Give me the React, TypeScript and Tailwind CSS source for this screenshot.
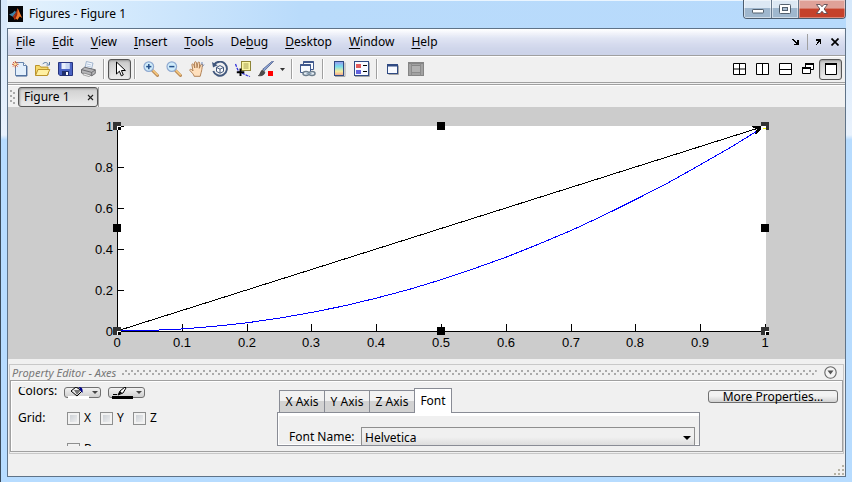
import type { ReactNode } from 'react';

const menus = [
  { before: '', key: 'F', after: 'ile' },
  { before: '', key: 'E', after: 'dit' },
  { before: '', key: 'V', after: 'iew' },
  { before: '', key: 'I', after: 'nsert' },
  { before: '', key: 'T', after: 'ools' },
  { before: 'De', key: 'b', after: 'ug' },
  { before: '', key: 'D', after: 'esktop' },
  { before: '', key: 'W', after: 'indow' },
  { before: '', key: 'H', after: 'elp' },
];

function Glyph({ children }: { children: ReactNode }) {
  return (
    <svg viewBox="0 0 16 16" className="size-4 shrink-0" aria-hidden="true">
      {children}
    </svg>
  );
}

function ToolButton({ label, pressed, children }: { label: string; pressed?: boolean; children: ReactNode }) {
  return (
    <button
      type="button"
      aria-label={label}
      aria-pressed={pressed}
      className={
        pressed
          ? 'flex h-[21px] w-[23px] shrink-0 items-center justify-center rounded-[3px] border border-[#555] bg-linear-to-b from-[#c8c8c8] to-[#ededed] shadow-[inset_0_1px_2px_#999]'
          : 'flex h-[21px] w-[23px] shrink-0 items-center justify-center'
      }
    >
      {children}
    </button>
  );
}

function Separator() {
  return <div className="mx-[3px] h-5 w-0.5 shrink-0 border-r border-l border-r-white border-l-[#a0a0a0]" />;
}

function Magnifier({ plus }: { plus?: boolean }) {
  return (
    <Glyph>
      <path d="M9.5 9.5l5 5" stroke="#b98a58" strokeWidth="3" strokeLinecap="round" />
      <path d="M10 9.5l4.3 4.3" stroke="#f6c77c" strokeWidth="1.6" strokeLinecap="round" />
      <circle cx="5.8" cy="5.6" r="4.8" fill="#d0ecfa" stroke="#8fa9d0" strokeWidth="1.2" />
      <path d="M3.2 5.6h5.2" stroke="#24508c" strokeWidth="1.5" />
      {plus && <path d="M5.8 3v5.2" stroke="#24508c" strokeWidth="1.5" />}
    </Glyph>
  );
}

function TitleBar() {
  return (
    <header className="flex h-7 items-start bg-linear-to-r from-[#e4f2fd] via-[#b9dbfb] via-35% to-[#b7dafc] shadow-[inset_0_1px_0_#eaf5ff]">
      <div className="flex h-full min-w-0 flex-1 items-center gap-1.5 pl-px">
        <svg viewBox="0 0 15 16" className="h-4 w-[15px]" aria-hidden="true">
          <rect width="15" height="16" fill="#050608" />
          <path d="M1 8.5l3.5-1.4L7 4.5l1 2-3.2 4.2z" fill="#3f83a8" />
          <path d="M5 10.6l3-4L9.7 2.2 11 6l-2 6-2.3 2z" fill="#c33a14" />
          <path d="M9.7 2.2L14.2 12l-2.4-1.4L9.3 14 7 11.5l1.8-4z" fill="#f0792a" />
          <path d="M9.7 2.2L9.2 9 7 13.6 6 11l2.2-4z" fill="#8c2412" />
        </svg>
        <h1 className="text-xs text-black">Figures - Figure 1</h1>
      </div>
      <div className="flex h-[19px] overflow-hidden rounded-b-[4px] border border-t-0 border-[#4c5c6e]">
        <button type="button" aria-label="Minimize" className="flex w-7 items-center justify-center border-r border-[#66788c] bg-linear-to-b from-[#dce8f4] from-45% to-[#9fb7ce] to-45% shadow-[inset_0_0_0_1px_#ffffff80]">
          <svg viewBox="0 0 12 8" className="mt-1 h-2 w-3">
            <rect x="0.5" y="2.5" width="11" height="3.5" rx="0.6" fill="#fff" stroke="#53606e" />
          </svg>
        </button>
        <button type="button" aria-label="Maximize" className="flex w-[27px] items-center justify-center border-r border-[#66788c] bg-linear-to-b from-[#dce8f4] from-45% to-[#9fb7ce] to-45% shadow-[inset_0_0_0_1px_#ffffff80]">
          <svg viewBox="0 0 12 10" className="h-2.5 w-3">
            <rect x="0.5" y="0.5" width="11" height="9" rx="0.8" fill="#fff" stroke="#53606e" />
            <rect x="3.5" y="3.5" width="5" height="3" fill="#a9bdd1" stroke="#53606e" />
          </svg>
        </button>
        <button type="button" aria-label="Close window" className="flex w-[46px] items-center justify-center bg-linear-to-b from-[#dfa198] from-45% to-[#c5412b] to-50% shadow-[inset_0_0_0_1px_#ffffff60]">
          <svg viewBox="0 0 12 10" className="h-2.5 w-3">
            <path d="M0.5 0.5h3.6L6 2.8 7.9 0.5h3.6L8.1 5l3.4 4.5H7.9L6 7.2 4.1 9.5H0.5L3.9 5z" fill="#fff" stroke="#5b4a50" strokeWidth="0.9" />
          </svg>
        </button>
      </div>
    </header>
  );
}

function MenuBar() {
  return (
    <nav className="flex h-[27px] items-center border-b border-[#a0a0a0] bg-linear-to-b from-white via-[#e6eaf6] via-34% to-[#dfe4f4] shadow-[inset_0_-18px_12px_-6px_#ccd3e9]">
      <div className="flex flex-1 gap-[17px] pl-2">
        {menus.map((m) => (
          <button key={m.key + m.after} type="button" className="text-xs text-black">
            {m.before}
            <span className="underline underline-offset-2">{m.key}</span>
            {m.after}
          </button>
        ))}
      </div>
      <div className="flex items-center gap-1.5 pr-1.5">
        <button type="button" aria-label="Dock" className="mr-px">
          <svg viewBox="0 0 8 8" className="size-2" shapeRendering="crispEdges">
            <path d="M0 1h2v1h1v1h1v1h1V2h2v5H2V6h2V5H3V4H2V3H1V2H0z" />
          </svg>
        </button>
        <div className="h-4 w-px bg-[#a0a0a0]" />
        <button type="button" aria-label="Undock" className="ml-px">
          <svg viewBox="0 0 8 8" className="size-2" shapeRendering="crispEdges">
            <path d="M1 1h5v5H5V4H4v1H3v1H2v1H1V6h1V4h1V3H1z" />
          </svg>
        </button>
        <button type="button" aria-label="Close" className="ml-0.5">
          <svg viewBox="0 0 8 8" className="size-2">
            <path d="M0.5 0.5l7 7M7.5 0.5l-7 7" stroke="#000" strokeWidth="1.7" />
          </svg>
        </button>
      </div>
    </nav>
  );
}

function Toolbar() {
  return (
    <div role="toolbar" className="flex h-[27px] items-center border-b border-[#a0a0a0] shadow-[inset_0_1px_0_#fff]">
      <ToolButton label="New figure">
        <Glyph>
          <path d="M3.5 1.5h8l3 3v10h-11z" fill="#e3effb" stroke="#6685ad" />
          <path d="M11.5 1.5v3h3" fill="#fff" stroke="#6685ad" />
          <path d="M14.9 5v10H4" stroke="#3d5f91" fill="none" />
          <path d="M3.3 0v6.6M0 3.3h6.6M1 1l4.6 4.6M5.6 1L1 5.6" stroke="#cf5b35" />
          <circle cx="3.3" cy="3.3" r="1.3" fill="#ffe6a0" />
        </Glyph>
      </ToolButton>
      <ToolButton label="Open">
        <Glyph>
          <path d="M0.5 14V4.500h4l1.2 1.600h7.300V14z" fill="#f6d96b" stroke="#bb932b" />
          <path d="M0.5 14.500l2.500-6h11.800l-2.600 6z" fill="#fff0a2" stroke="#bb932b" />
          <path d="M7.500 3.200c2-2.400 4.600-2 5.800 0M14.500 1v3h-3" stroke="#56779e" fill="none" />
        </Glyph>
      </ToolButton>
      <ToolButton label="Save">
        <Glyph>
          <path d="M0.5 1.5h14v13H1.8L0.5 13z" fill="#4b64c4" stroke="#27347f" />
          <rect x="3.500" y="2" width="8" height="6" fill="#e8effb" />
          <path d="M7.500 2h4v6h-4z" fill="#c7d7f2" />
          <rect x="4" y="10" width="7" height="4.5" fill="#20306c" />
          <rect x="8" y="11" width="2" height="3" fill="#fff" />
        </Glyph>
      </ToolButton>
      <ToolButton label="Print">
        <Glyph>
          <path d="M4 7l1.4-6.500 6.600 1.600L10.500 8z" fill="#f4f8fd" stroke="#8ba3c1" strokeWidth="0.8" />
          <path d="M5.800 3l4.500 1M5.400 5l4.600 1" stroke="#9db4d0" strokeWidth="0.7" />
          <path d="M0.500 8.600l3.200-2.400 10.600 2.600v3.600l-3.400 2.400L0.500 12z" fill="#b6b6b8" stroke="#58585c" strokeWidth="0.8" />
          <path d="M0.500 8.600l10.200 2.800 3.600-2.600M10.700 11.400v3.200" fill="none" stroke="#5b5b5f" strokeWidth="0.8" />
          <path d="M2.500 12l7.500 2.200-2 1.400-6-1.800z" fill="#eee" stroke="#777" strokeWidth="0.6" />
        </Glyph>
      </ToolButton>
      <Separator />
      <ToolButton label="Edit plot" pressed>
        <Glyph>
          <path d="M4.5 1v12l2.9-2.8 1.9 4.6 2-.9-1.9-4.4h4z" fill="#fff" stroke="#000" />
        </Glyph>
      </ToolButton>
      <Separator />
      <ToolButton label="Zoom in">
        <Magnifier plus />
      </ToolButton>
      <ToolButton label="Zoom out">
        <Magnifier />
      </ToolButton>
      <ToolButton label="Pan">
        <Glyph>
          <path
            d="M5.2 15.3c-.4-2-2.200-3.300-4.400-6 .1-1.700 1.700-1.300 3.200.7L2.900 3.800c.1-1.400 1.600-1.300 1.900 0l1 3.200-.3-5.200c.2-1.500 1.700-1.400 2 0l.5 5 .9-5c.4-1.300 1.800-1 1.800.4l-.4 5.100 1.700-3.700c.6-1.100 1.800-.6 1.500.7-.7 3.700-.6 4.800-1.400 7.400l-.9 3.600z"
            fill="#ffe0bd"
            stroke="#a9774a"
            strokeWidth="0.9"
          />
          <path d="M13 1v3M15 3.5l-1.5 2" stroke="#4e72b0" strokeWidth="0.8" />
        </Glyph>
      </ToolButton>
      <ToolButton label="Rotate 3D">
        <Glyph>
          <path d="M2.2 3.6A7 7 0 1 1 1.3 10" fill="none" stroke="#42587d" strokeWidth="1.9" />
          <path d="M0 1l1 5.6 4.6-2.3z" fill="#42587d" />
          <path d="M8 4.6l3.5 1.8v4L8 12.2l-3.5-1.8v-4z M4.5 6.4L8 8.2l3.5-1.8M8 8.2v4" fill="#fff" stroke="#42587d" />
        </Glyph>
      </ToolButton>
      <ToolButton label="Data cursor">
        <Glyph>
          <rect x="6.500" y="0.500" width="9" height="9" fill="#fbf7a6" stroke="#8e8538" />
          <path d="M8.500 3h5M8.500 5h5M8.500 7h5" stroke="#9b9348" strokeWidth="0.9" />
          <path d="M0.500 3l1.500 4 2 4M7 12l3 1.500 2 1 3 1" stroke="#2929d8" strokeWidth="1.2" strokeDasharray="3 1" fill="none" />
          <path d="M5.500 7.500v7.500M1.800 11.200h7.500" stroke="#000" strokeWidth="1.900" />
        </Glyph>
      </ToolButton>
      <ToolButton label="Brush">
        <Glyph>
          <path d="M15.500.4L6.600 9.600l-1.800-1.400L14.400 0z" fill="#90a8d8" stroke="#3b4c7d" strokeWidth="0.7" />
          <path d="M.2 14.700c2.200-.5 1.700-4.400 4.200-5.600l2.400 1.800c.2 2.800-3 4.400-6.600 3.800z" fill="#4d4d4d" stroke="#333" strokeWidth="0.6" />
          <rect x="10" y="10" width="5" height="5" fill="#f00" />
        </Glyph>
      </ToolButton>
      <button type="button" aria-label="Brush colour" className="flex h-5 w-[11px] items-center justify-center">
        <svg viewBox="0 0 5 3" className="h-[3px] w-[5px]">
          <path d="M0 0h5L2.5 3z" fill="#333" />
        </svg>
      </button>
      <Separator />
      <ToolButton label="Link plot">
        <Glyph>
          <path d="M3.500.500h10v8h-10z" fill="#f8fbff" stroke="#40598d" />
          <path d="M3.500 1h10" stroke="#40598d" strokeWidth="2" />
          <path d="M0.500 3.500h10v8h-10z" fill="#f8fbff" stroke="#40598d" />
          <path d="M0.500 4h10" stroke="#40598d" strokeWidth="2" />
          <ellipse cx="6" cy="12.500" rx="3" ry="2" fill="#e6eef5" stroke="#6c7d8c" strokeWidth="1.500" />
          <ellipse cx="12" cy="12.500" rx="3" ry="2" fill="#e6eef5" stroke="#6c7d8c" strokeWidth="1.500" />
          <path d="M6.500 12.500h5" stroke="#8ea4b8" strokeWidth="1.500" />
        </Glyph>
      </ToolButton>
      <Separator />
      <ToolButton label="Insert colorbar">
        <Glyph>
          <defs>
            <linearGradient id="spectrum" x1="0" x2="0" y1="0" y2="1">
              <stop offset="0" stopColor="#9a97ee" />
              <stop offset="0.35" stopColor="#78dcec" />
              <stop offset="0.7" stopColor="#f4efa0" />
              <stop offset="1" stopColor="#f2a08f" />
            </linearGradient>
          </defs>
          <path d="M4 15.5h10V1.5" stroke="#a6a6a6" fill="none" />
          <rect x="3.5" y="0.5" width="9" height="14" fill="url(#spectrum)" stroke="#304b83" />
        </Glyph>
      </ToolButton>
      <ToolButton label="Insert legend">
        <Glyph>
          <path d="M1 15.5h14.5V1.5" stroke="#a6a6a6" fill="none" />
          <rect x="0.5" y="0.5" width="14" height="14" fill="#f8faff" stroke="#304b83" />
          <rect x="2" y="3" width="5" height="4" fill="#e25b5b" />
          <rect x="2" y="9" width="5" height="4" fill="#6262dd" />
          <path d="M9 4.5h4M9 10.5h4" stroke="#000" />
        </Glyph>
      </ToolButton>
      <Separator />
      <ToolButton label="Hide plot tools">
        <Glyph>
          <path d="M3.5 13.5h10v-9" stroke="#a6a6a6" fill="none" />
          <rect x="2.5" y="3.5" width="10" height="9" fill="#f8faff" stroke="#304b83" />
          <path d="M2 4.5h11" stroke="#304b83" strokeWidth="2" />
        </Glyph>
      </ToolButton>
      <ToolButton label="Show plot tools and dock figure">
        <Glyph>
          <rect x="0.5" y="1.5" width="15" height="13" fill="#a2a2a2" stroke="#858585" />
          <path d="M1 2.5h14" stroke="#858585" />
          <rect x="3.5" y="4.5" width="9" height="7" fill="#b0b0b0" stroke="#858585" />
          <path d="M3.5 2.5v12M12.5 2.5v12M3.5 11.5h9" stroke="#8c8c8c" />
        </Glyph>
      </ToolButton>
      <div className="ml-auto flex pr-[3px]">
        <ToolButton label="Tile">
          <Glyph>
            <path d="M2.5 2.5h12v11h-12zM8.500 2.500v11M2.500 8h12" fill="#fff" stroke="#000" />
          </Glyph>
        </ToolButton>
        <ToolButton label="Left and right split">
          <Glyph>
            <path d="M2.5 2.5h12v11h-12zM8.5 2.5v11" fill="#fff" stroke="#000" />
          </Glyph>
        </ToolButton>
        <ToolButton label="Top and bottom split">
          <Glyph>
            <path d="M2.5 2.5h12v11h-12zM2.5 8.5h12" fill="#fff" stroke="#000" />
          </Glyph>
        </ToolButton>
        <ToolButton label="Float">
          <Glyph>
            <path d="M5.500 2.500h8v6h-8z" fill="#fff" stroke="#000" />
            <path d="M5 3h9" stroke="#000" strokeWidth="2" />
            <path d="M2.500 6.500h8v6h-8z" fill="#fff" stroke="#000" />
            <path d="M2 7h9" stroke="#000" strokeWidth="2" />
          </Glyph>
        </ToolButton>
        <ToolButton label="Maximize document" pressed>
          <Glyph>
            <path d="M2.5 2.5h11v11h-11z" fill="#fff" stroke="#000" />
            <path d="M2 3h12" stroke="#000" strokeWidth="2" />
          </Glyph>
        </ToolButton>
      </div>
    </div>
  );
}

function DocumentTabs() {
  return (
    <div className="mt-px flex h-[23px] items-start border-t border-[#a0a0a0] pt-0.5 pl-0.5 shadow-[inset_0_1px_0_#fff]">
      <svg viewBox="0 0 6 16" className="h-[18px] w-1.5" aria-hidden="true">
        <path d="M0 2h2v2H0zM3 4h2v2H3zM0 7h2v2H0zM3 9h2v2H3zM0 12h2v2H0zM3 14h2v2H3z" fill="#aaa" />
      </svg>
      <div className="ml-0.5 flex h-5 w-20 items-center justify-between rounded-[3px] border border-[#555] bg-linear-to-b from-[#cfcfcf] to-[#ececec] pr-[3px] pl-[5px] shadow-[inset_1px_1px_2px_#999]">
        <button type="button" className="text-xs text-black">
          Figure 1
        </button>
        <button type="button" aria-label="Close Figure 1">
          <svg viewBox="0 0 7 7" className="size-[7px]">
            <path d="M1 1l5 5M6 1L1 6" stroke="#222" strokeWidth="1.1" />
          </svg>
        </button>
      </div>
      <div className="h-5 w-px bg-[#a0a0a0]" />
    </div>
  );
}

const left = 109;
const right = 757;
const top = 19;
const bottom = 224;
const steps = Array.from({ length: 11 }, (_, i) => i / 10);
const px = (v: number) => Math.round(left + v * (right - left));
const py = (v: number) => Math.round(bottom - v * (bottom - top));

const corners = [
  [left, top],
  [left, bottom],
  [right, bottom],
];
const middles = [
  [433, top],
  [left, 121],
  [right, 121],
  [433, bottom],
];

function Plot() {
  const curve = Array.from({ length: 21 }, (_, i) => `${px(i / 20)},${bottom - (i / 20) ** 2 * (bottom - top)}`).join(' ');
  return (
    <svg viewBox="0 0 837 252" className="block w-full bg-[#ccc]" role="img" aria-label="Axes">
      <rect x={left} y={top} width={right - left + 1} height={bottom - top} fill="#fff" />
      <g shapeRendering="crispEdges" stroke="#000">
        <path d={`M${left + 0.5} ${top}V${bottom + 0.5}H${right + 1}`} fill="none" />
        {steps.map((v) => (
          <path key={v} d={`M${px(v) + 0.5} ${bottom}v-7`} />
        ))}
        {[0, 0.2, 0.4, 0.6, 0.8, 1].map((v) => (
          <path key={v} d={`M${left} ${py(v) + 0.5}h7`} />
        ))}
      </g>
      <g fill="#000" fontSize="13" fontFamily='"Liberation Sans", Arial, sans-serif'>
        {steps.map((v) => (
          <text key={v} x={px(v)} y="240" textAnchor="middle">
            {v}
          </text>
        ))}
        {[0, 0.2, 0.4, 0.6, 0.8, 1].map((v) => (
          <text key={v} x="105" y={py(v) + 5} textAnchor="end">
            {v}
          </text>
        ))}
      </g>
      <g shapeRendering="crispEdges" fill="none">
        <path d={`M${left} ${bottom}L${right} ${top}`} stroke="#000" />
        <polyline points={curve} stroke="#00f" />
      </g>
      <g shapeRendering="crispEdges">
        {corners.map(([x, y]) => (
          <g key={`${x}-${y}`}>
            <rect x={x - 4} y={y - 4} width="8" height="8" fill="#333" />
            <path d={`M${x} ${y}h4v4h-4z`} fill="#fff" />
            <path d={`M${x + 1} ${y + 1}h3v3h-3z`} fill="#000" />
          </g>
        ))}
        {middles.map(([x, y]) => (
          <rect key={`${x}-${y}`} x={x - 4} y={y - 4} width="8" height="8" fill="#000" />
        ))}
        <rect x={right - 4} y={top - 4} width="8" height="8" fill="#333" />
        <rect x={right - 4} y={top} width="5" height="4" fill="#fff" />
        <path d={`M${right - 2} ${top + 2.5}h3`} stroke="#ff0" />
        <path d={`M${right - 4} ${top}v3l-3 3-2 3-1-1 2-5-5-2v-1z`} fill="#000" />
      </g>
    </svg>
  );
}

function Check({ label }: { label: string }) {
  return (
    <label className="flex w-[33px] items-center gap-1">
      <input
        type="checkbox"
        className="size-[13px] shrink-0 appearance-none border border-[#8e8f8f] bg-linear-to-br from-[#c5cad0] to-[#f5f5f5] shadow-[inset_0_0_0_2px_#f2f2f2]"
      />
      {label}
    </label>
  );
}

function ColorButton({ label, children }: { label: string; children: ReactNode }) {
  return (
    <button type="button" aria-label={label} className="h-[11px] w-[37px] rounded-[3px] border border-[#707070] bg-linear-to-b from-[#f2f2f2] to-[#cfcfcf]">
      <svg viewBox="0 0 35 9" className="h-[9px] w-full overflow-visible">
        {children}
        <path d="M27 3h6l-3 3z" fill="#444" />
      </svg>
    </button>
  );
}

function PropertyEditor() {
  return (
    <section className="mx-px mt-[5px] border border-[#c8c8c8] pb-px">
      <div className="flex h-[15px] items-center gap-1.5 pr-1.5 pl-0.5">
        <h2 className="text-[11px] leading-3 text-[#777] italic">Property Editor - Axes</h2>
        <svg className="h-1.5 min-w-0 flex-1" aria-hidden="true">
          <defs>
            <pattern id="grip" width="6" height="6" patternUnits="userSpaceOnUse">
              <path d="M0 3h2v2H0zM3 0h2v2H3z" fill="#aaa" />
            </pattern>
          </defs>
          <rect width="100%" height="6" fill="url(#grip)" />
        </svg>
        <button type="button" aria-label="Panel actions" className="ml-px">
          <svg viewBox="0 0 13 13" className="size-[13px]">
            <circle cx="6.5" cy="6.5" r="5.7" fill="#f4f4f4" stroke="#666" strokeWidth="1.1" />
            <path d="M3.5 4.5h6l-3 4z" fill="#555" />
          </svg>
        </button>
      </div>
      <div className="flex h-[72px] items-start border border-[#a0a0a0] pr-1 pl-[7px] text-xs text-black shadow-[inset_1px_1px_0_#fff]">
        <div className="mt-1.5 h-[59px] w-[259px] overflow-hidden">
          <div className="flex h-3 items-start">
            <div className="flex h-2 w-[46px] items-center overflow-hidden">Colors:</div>
            <div className="flex gap-[7px]">
              <ColorButton label="Background colour">
                <rect x="3" y="8" width="21" height="3" fill="#fff" />
                <path d="M6 3l5-4 6 4-5 5z" fill="#eee" stroke="#000" />
                <path d="M9 2h7l-4 5z" fill="#777" />
                <path d="M14-1c3 0 4 2 3.500 6l-2.500-3z" fill="#00008b" />
              </ColorButton>
              <ColorButton label="Line colour">
                <rect x="3" y="8" width="21" height="3" />
                <path d="M4 6.500h4" stroke="#000" />
                <path d="M9 7l2-4 5-4 1 1-3 5z" fill="#fff" stroke="#000" />
                <path d="M9 7l2-4 2 2z" />
              </ColorButton>
            </div>
          </div>
          <div className="mt-2.5 flex h-[18px] items-center">
            <div className="w-[49px]">Grid:</div>
            <Check label="X" />
            <Check label="Y" />
            <Check label="Z" />
          </div>
          <div className="mt-3.5 flex pl-[49px]">
            <Check label="Box" />
          </div>
        </div>
        <div className="mt-[7px] h-[58px] w-[423px]">
          <div role="tablist" className="relative flex h-6 items-end pl-0.5">
            {['X Axis', 'Y Axis', 'Z Axis'].map((tab) => (
              <button
                key={tab}
                type="button"
                role="tab"
                className="-mr-px h-[22px] w-[46px] border border-b-0 border-[#898c95] bg-linear-to-b from-[#f2f2f2] from-45% to-[#d2d2d2] to-50%"
              >
                {tab}
              </button>
            ))}
            <button type="button" role="tab" aria-selected="true" className="-mb-px h-[25px] w-[38px] border border-b-0 border-[#898c95] bg-white">
              Font
            </button>
          </div>
          <div className="flex h-[34px] items-start overflow-hidden border border-[#898c95] bg-[#f0f0f0] pt-3.5 pr-1 pl-[11px] shadow-[inset_0_3px_0_#fff,inset_1px_-1px_0_#fff]">
            <label htmlFor="font-name" className="mt-0.5 w-[72px] shrink-0">
              Font Name:
            </label>
            <div className="relative flex min-w-0 flex-1 items-center">
              <select id="font-name" className="h-[22px] w-full appearance-none border border-[#8f8f8f] bg-linear-to-b from-[#f0f0f0] from-45% to-[#d6d6d6] pl-[3px] text-xs">
                <option>Helvetica</option>
              </select>
              <svg viewBox="0 0 8 4" className="pointer-events-none absolute right-1 h-1 w-2" aria-hidden="true">
                <path d="M0 0h8L4 4z" />
              </svg>
            </div>
          </div>
        </div>
        <div className="flex flex-1 justify-end pt-[9px]">
          <button type="button" className="flex h-[13px] w-[130px] items-center justify-center rounded-[3px] border border-[#707070] bg-linear-to-b from-[#f2f2f2] from-45% to-[#d0d0d0]">
            More Properties...
          </button>
        </div>
      </div>
    </section>
  );
}

export default function App() {
  return (
    <div className="flex min-h-screen flex-col border-l border-[#3a4a5a] bg-linear-to-b from-[#d5e8fb] via-[#e9f2fd] via-28% to-[#b7dcff] to-29% pr-1.5 pb-[5px] pl-1.5 font-['Noto_Sans','Open_Sans',sans-serif]">
      <TitleBar />
      <main className="flex flex-1 flex-col border border-[#5f7388] bg-[#f0f0f0]">
        <MenuBar />
        <Toolbar />
        <DocumentTabs />
        <Plot />
        <PropertyEditor />
        <div className="flex flex-1 items-end justify-end">
          <svg viewBox="0 0 11 11" className="size-[11px]" aria-hidden="true">
            <path d="M8 0h2v2H8zM4 4h2v2H4zM8 4h2v2H8zM0 8h2v2H0zM4 8h2v2H4zM8 8h2v2H8z" fill="#b5b2a5" />
          </svg>
        </div>
      </main>
    </div>
  );
}
